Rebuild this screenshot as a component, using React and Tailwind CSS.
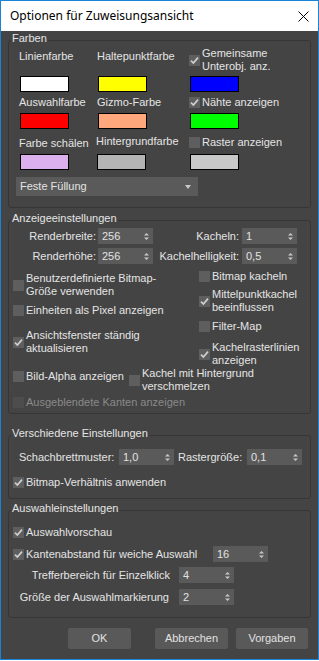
import React from 'react';

const font = "font-['Liberation_Sans',Arial,sans-serif]";

function Box({ checked, disabled }) {
  return (
    <div
      className={`w-[11px] h-[11px] shrink-0 flex items-center justify-center ${
        disabled ? 'bg-[#4d4d4d]' : 'bg-[#5e5e5e]'
      }`}
    >
      {checked && (
        <svg width="11" height="11" viewBox="0 0 11 11">
          <path d="M2 5.6 L4.4 8 L9 2.6" fill="none" stroke="#cfcfcf" strokeWidth="1.7" />
        </svg>
      )}
    </div>
  );
}

function Check({ checked, disabled, lines, className = '' }) {
  return (
    <div className={`flex items-center gap-[2px] ${className}`}>
      <Box checked={checked} disabled={disabled} />
      <div className={disabled ? 'text-[#8a8a8a]' : ''}>
        {lines.map((l) => (
          <div key={l} className="whitespace-nowrap">
            {l}
          </div>
        ))}
      </div>
    </div>
  );
}

function Spin({ value, className = '' }) {
  return (
    <div className={`h-[16px] bg-[#5a5a5a] flex items-center pl-[4px] pr-[4px] ${className}`}>
      <span className="flex-1 text-[#e2e2e2]">{value}</span>
      <svg width="5" height="9" viewBox="0 0 5 9">
        <path d="M0 3.5 L2.5 1 L5 3.5 Z" fill="#c8c8c8" />
        <path d="M0 5.5 L2.5 8 L5 5.5 Z" fill="#c8c8c8" />
      </svg>
    </div>
  );
}

function Group({ title, className = '', children }) {
  return (
    <div className={`relative border border-[#363636] rounded-[3px] ${className}`}>
      <span className="absolute -top-[9px] left-[2px] px-[1px] bg-[#444444] whitespace-nowrap">
        {title}
      </span>
      {children}
    </div>
  );
}

function Swatch({ color, className = '' }) {
  return <div className={`w-[49px] h-[16px] border border-black ${className}`} style={{ background: color }} />;
}

function Btn({ label, className = '' }) {
  return (
    <div className={`h-[21px] rounded-[2px] bg-[#595959] flex items-center justify-center text-[#e2e2e2] ${className}`}>
      {label}
    </div>
  );
}

export default function App() {
  return (
    <div className="w-[319px] h-[661px] bg-white">
      <div className="w-[319px] h-[660px] border border-[#1883d7] flex flex-col">
        <div className="h-[30px] bg-white flex items-center justify-between pl-[9px] pr-[9px] font-['Noto_Sans',sans-serif] text-[12px] text-black">
          <span>Optionen für Zuweisungsansicht</span>
          <svg width="11" height="11" viewBox="0 0 11 11">
            <path d="M0.5 0.5 L10.5 10.5 M10.5 0.5 L0.5 10.5" stroke="#000" strokeWidth="1" />
          </svg>
        </div>

        <div className={`flex-1 bg-[#444444] px-[7px] pt-[9px] ${font} text-[11px] leading-[13px] text-[#e4e4e4]`}>
          {/* Farben */}
          <Group title="Farben" className="pt-[6px] pb-[11px]">
            <div className="grid grid-cols-[78px_92px_1fr] pl-[10px] h-[29px]">
              <div className="mt-[3px]">Linienfarbe</div>
              <div className="mt-[3px]">Haltepunktfarbe</div>
              <Check checked lines={['Gemeinsame', 'Unterobj. anz.']} className="self-start" />
            </div>
            <div className="grid grid-cols-[78px_92px_1fr] pl-[10px]">
              <Swatch color="#ffffff" className="ml-[1px]" />
              <Swatch color="#ffff00" className="ml-[1px]" />
              <Swatch color="#0000ff" className="ml-[1px]" />
            </div>
            <div className="grid grid-cols-[78px_92px_1fr] pl-[10px] h-[21px]">
              <div className="mt-[4px]">Auswahlfarbe</div>
              <div className="mt-[4px]">Gizmo-Farbe</div>
              <Check checked lines={['Nähte anzeigen']} className="self-start mt-[4px]" />
            </div>
            <div className="grid grid-cols-[78px_92px_1fr] pl-[10px]">
              <Swatch color="#ff0000" className="ml-[1px]" />
              <Swatch color="#ffa77c" className="ml-[1px]" />
              <Swatch color="#00ff00" className="ml-[1px]" />
            </div>
            <div className="grid grid-cols-[78px_92px_1fr] pl-[10px] h-[25px]">
              <div className="mt-[8px]">Farbe schälen</div>
              <div className="mt-[6px] -ml-[1px]">Hintergrundfarbe</div>
              <Check lines={['Raster anzeigen']} className="self-start mt-[7px]" />
            </div>
            <div className="grid grid-cols-[78px_92px_1fr] pl-[10px]">
              <Swatch color="#dcb0ee" className="ml-[1px]" />
              <Swatch color="#b4b4b4" />
              <Swatch color="#c8c8c8" className="ml-[1px]" />
            </div>
            <div className="ml-[7px] mt-[7px] w-[182px] h-[19px] bg-[#5a5a5a] flex items-center pl-[4px] pr-[7px]">
              <span className="flex-1">Feste Füllung</span>
              <svg width="6" height="4" viewBox="0 0 6 4">
                <path d="M0 0 L6 0 L3 4 Z" fill="#c8c8c8" />
              </svg>
            </div>
          </Group>

          {/* Anzeigeeinstellungen */}
          <Group title="Anzeigeeinstellungen" className="mt-[12px] pt-[7px] pb-[4px]">
            <div className="flex items-center h-[16px]">
              <div className="w-[89px] text-right pr-[2px]">Renderbreite:</div>
              <Spin value="256" className="w-[55px]" />
              <div className="w-[89px] text-right pr-[3px]">Kacheln:</div>
              <Spin value="1" className="w-[55px]" />
            </div>
            <div className="flex items-center h-[16px] mt-[4px]">
              <div className="w-[89px] text-right pr-[2px]">Renderhöhe:</div>
              <Spin value="256" className="w-[55px]" />
              <div className="w-[89px] text-right pr-[3px] whitespace-nowrap">Kachelhelligkeit:</div>
              <Spin value="0,5" className="w-[55px]" />
            </div>
            <div className="flex pl-[4px]">
              <div className="w-[186px] flex flex-col items-start">
                <Check lines={['Benutzerdefinierte Bitmap-', 'Größe verwenden']} className="mt-[8px]" />
                <Check lines={['Einheiten als Pixel anzeigen']} className="mt-[6px]" />
                <Check checked lines={['Ansichtsfenster ständig', 'aktualisieren']} className="mt-[12px]" />
              </div>
              <div className="flex flex-col items-start">
                <Check lines={['Bitmap kacheln']} className="mt-[6px]" />
                <Check checked lines={['Mittelpunktkachel', 'beeinflussen']} className="mt-[5px]" />
                <Check lines={['Filter-Map']} className="mt-[6px]" />
                <Check checked lines={['Kachelrasterlinien', 'anzeigen']} className="mt-[8px]" />
              </div>
            </div>
            <div className="flex items-start pl-[4px]">
              <Check lines={['Bild-Alpha anzeigen']} className="w-[116px] mt-[3px]" />
              <Check lines={['Kachel mit Hintergrund', 'verschmelzen']} />
            </div>
            <Check disabled lines={['Ausgeblendete Kanten anzeigen']} className="ml-[4px] mt-[3px]" />
          </Group>

          {/* Verschiedene Einstellungen */}
          <Group title="Verschiedene Einstellungen" className="mt-[21px] pt-[13px] pb-[9px]">
            <div className="flex items-center h-[16px] pl-[10px]">
              <div className="w-[100px]">Schachbrettmuster:</div>
              <Spin value="1,0" className="w-[55px]" />
              <div className="w-[73px] pl-[4px]">Rastergröße:</div>
              <Spin value="0,1" className="w-[55px]" />
            </div>
            <Check checked lines={['Bitmap-Verhältnis anwenden']} className="ml-[4px] mt-[11px]" />
          </Group>

          {/* Auswahleinstellungen */}
          <Group title="Auswahleinstellungen" className="mt-[11px] pt-[15px] pb-[12px]">
            <Check checked lines={['Auswahlvorschau']} className="ml-[4px]" />
            <div className="flex items-center h-[16px] mt-[7px] pl-[4px]">
              <Check checked lines={['Kantenabstand für weiche Auswahl']} className="w-[200px]" />
              <Spin value="16" className="w-[55px]" />
            </div>
            <div className="flex items-center h-[16px] mt-[5px]">
              <div className="w-[170px] text-right pr-[9px]">Trefferbereich für Einzelklick</div>
              <Spin value="4" className="w-[55px]" />
            </div>
            <div className="flex items-center h-[16px] mt-[6px]">
              <div className="w-[170px] text-right pr-[10px]">Größe der Auswahlmarkierung</div>
              <Spin value="2" className="w-[55px]" />
            </div>
          </Group>

          <div className="flex mt-[10px]">
            <Btn label="OK" className="ml-[60px] w-[63px]" />
            <Btn label="Abbrechen" className="ml-[24px] w-[73px]" />
            <Btn label="Vorgaben" className="ml-[8px] w-[72px]" />
          </div>
        </div>
      </div>
    </div>
  );
}
